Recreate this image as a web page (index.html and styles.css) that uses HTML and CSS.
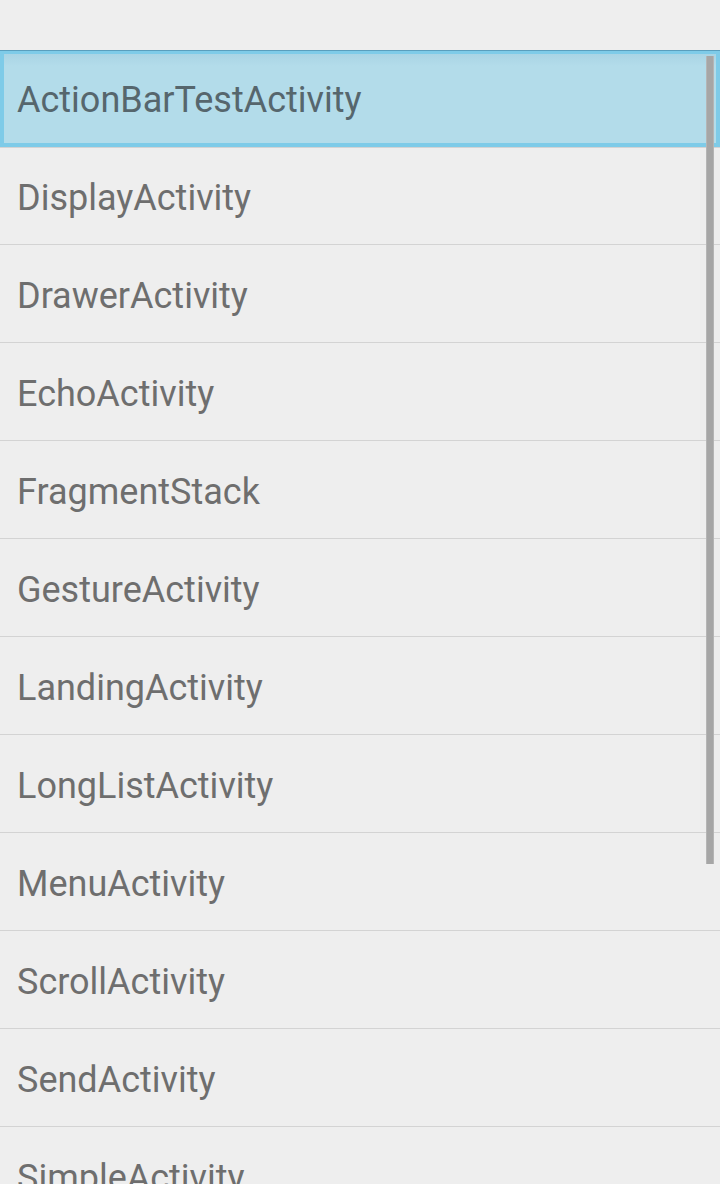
FILE: index.html
```html
<!DOCTYPE html>
<html>
<head>
<meta charset="utf-8">
<link rel="stylesheet" href="styles.css">
</head>
<body>
<div class="screen">
  <div class="top"></div>
  <ul class="list">
    <li class="row selected"><span class="label">ActionBarTestActivity</span></li>
    <li class="row"><span class="label">DisplayActivity</span></li>
    <li class="row"><span class="label">DrawerActivity</span></li>
    <li class="row"><span class="label">EchoActivity</span></li>
    <li class="row"><span class="label">FragmentStack</span></li>
    <li class="row"><span class="label">GestureActivity</span></li>
    <li class="row"><span class="label">LandingActivity</span></li>
    <li class="row"><span class="label">LongListActivity</span></li>
    <li class="row"><span class="label">MenuActivity</span></li>
    <li class="row"><span class="label">ScrollActivity</span></li>
    <li class="row"><span class="label">SendActivity</span></li>
    <li class="row"><span class="label">SimpleActivity</span></li>
  </ul>
  <div class="scrollbar"></div>
</div>
</body>
</html>
```

FILE: styles.css
```css
html, body {
  margin: 0;
  padding: 0;
  background: #eeeeee;
}
.screen {
  position: relative;
  width: 720px;
  height: 1184px;
  overflow: hidden;
  background: #eeeeee;
  font-family: Roboto, "Noto Sans", sans-serif;
}
.top {
  height: 50px;
}
.list {
  list-style: none;
  margin: 0;
  padding: 0;
}
.row {
  box-sizing: border-box;
  height: 98px;
  border-bottom: 1px solid #d3d3d3;
  display: flex;
  align-items: center;
  padding-left: 17px;
  color: #6e6e6e;
  font-size: 36px;
  letter-spacing: 0;
}
.label {
  display: block;
  margin-top: 5px;
}
.row.selected {
  height: 97px;
  padding-left: 13px;
  background: linear-gradient(#a9d4e4, #b3dcea 12px, #b3dcea);
  border: 4px solid #7ecbe8;
  color: #56666d;
  position: relative;
}
.row.selected .label {
  margin-top: 3px;
}
.row.selected::after {
  content: "";
  position: absolute;
  left: -4px;
  right: -4px;
  top: -4px;
  height: 1px;
  background: #5a9fbe;
}
.row.selected::before {
  content: "";
  position: absolute;
  left: -4px;
  right: -4px;
  bottom: -5px;
  height: 1px;
  background: #d3d3d3;
}
.scrollbar {
  position: absolute;
  left: 706px;
  top: 56px;
  width: 8px;
  height: 808px;
  background: #a6a6a6;
  box-shadow: inset 1px 0 0 #b5b5b5, inset -1px 0 0 #b5b5b5;
}
```
